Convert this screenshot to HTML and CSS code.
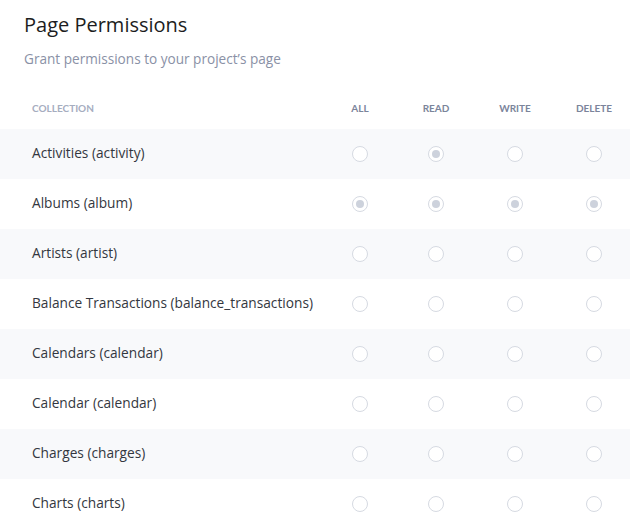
FILE: index.html
```html
<!DOCTYPE html>
<html lang="en">
<head>
<meta charset="utf-8">
<title>Page Permissions</title>
<link rel="stylesheet" href="styles.css">
</head>
<body>
<div class="page">
  <header class="intro">
    <h1 class="title">Page Permissions</h1>
    <p class="subtitle">Grant permissions to your project’s page</p>
  </header>
  <div class="table">
    <div class="row head">
      <div class="name">Collection</div>
      <div class="cell">All</div>
      <div class="cell">Read</div>
      <div class="cell">Write</div>
      <div class="cell">Delete</div>
    </div>
    <div class="row alt">
      <div class="name">Activities (activity)</div>
      <div class="cell"><span class="radio"></span></div>
      <div class="cell"><span class="radio on"></span></div>
      <div class="cell"><span class="radio"></span></div>
      <div class="cell"><span class="radio"></span></div>
    </div>
    <div class="row">
      <div class="name">Albums (album)</div>
      <div class="cell"><span class="radio on"></span></div>
      <div class="cell"><span class="radio on"></span></div>
      <div class="cell"><span class="radio on"></span></div>
      <div class="cell"><span class="radio on"></span></div>
    </div>
    <div class="row alt">
      <div class="name">Artists (artist)</div>
      <div class="cell"><span class="radio"></span></div>
      <div class="cell"><span class="radio"></span></div>
      <div class="cell"><span class="radio"></span></div>
      <div class="cell"><span class="radio"></span></div>
    </div>
    <div class="row">
      <div class="name">Balance Transactions (balance_transactions)</div>
      <div class="cell"><span class="radio"></span></div>
      <div class="cell"><span class="radio"></span></div>
      <div class="cell"><span class="radio"></span></div>
      <div class="cell"><span class="radio"></span></div>
    </div>
    <div class="row alt">
      <div class="name">Calendars (calendar)</div>
      <div class="cell"><span class="radio"></span></div>
      <div class="cell"><span class="radio"></span></div>
      <div class="cell"><span class="radio"></span></div>
      <div class="cell"><span class="radio"></span></div>
    </div>
    <div class="row">
      <div class="name">Calendar (calendar)</div>
      <div class="cell"><span class="radio"></span></div>
      <div class="cell"><span class="radio"></span></div>
      <div class="cell"><span class="radio"></span></div>
      <div class="cell"><span class="radio"></span></div>
    </div>
    <div class="row alt">
      <div class="name">Charges (charges)</div>
      <div class="cell"><span class="radio"></span></div>
      <div class="cell"><span class="radio"></span></div>
      <div class="cell"><span class="radio"></span></div>
      <div class="cell"><span class="radio"></span></div>
    </div>
    <div class="row">
      <div class="name">Charts (charts)</div>
      <div class="cell"><span class="radio"></span></div>
      <div class="cell"><span class="radio"></span></div>
      <div class="cell"><span class="radio"></span></div>
      <div class="cell"><span class="radio"></span></div>
    </div>
  </div>
</div>
</body>
</html>
```

FILE: styles.css
```css
html, body {
  margin: 0;
  padding: 0;
  background: #ffffff;
}
body {
  font-family: "Open Sans", "Noto Sans", sans-serif;
  color: #333740;
  width: 630px;
  height: 522px;
  overflow: hidden;
}
.page {
  display: flex;
  flex-direction: column;
}
.intro {
  padding: 11px 24px 0 24px;
}
.title {
  margin: 0;
  font-size: 20px;
  line-height: 28px;
  font-weight: 400;
  color: #1c1d21;
}
.subtitle {
  margin: 10px 0 0 0;
  font-size: 13.6px;
  line-height: 20px;
  color: #8a91a6;
}
.table {
  margin-top: 16px;
  display: flex;
  flex-direction: column;
}
.row {
  display: grid;
  grid-template-columns: 320px 80px 72px 86px 72px;
  align-items: center;
  height: 50px;
}
.row.alt {
  background: #f8f9fb;
}
.row.head {
  height: 44px;
  padding-top: 2px;
  box-sizing: border-box;
  font-family: "Lato", "Open Sans", sans-serif;
  font-size: 10px;
  text-transform: uppercase;
  font-weight: 700;
}
.name {
  padding-left: 32px;
  padding-bottom: 4px;
  font-size: 13.7px;
  white-space: nowrap;
}
.head .name {
  font-size: 10px;
  padding-bottom: 0;
  color: #a6adbf;
  font-weight: 700;
}
.head .cell {
  color: #7b849b;
}
.cell {
  display: flex;
  justify-content: center;
  align-items: center;
}
.radio {
  width: 16px;
  height: 16px;
  box-sizing: border-box;
  border: 1px solid #d6dae2;
  border-radius: 50%;
  background: #ffffff;
  display: flex;
  align-items: center;
  justify-content: center;
}
.radio.on::after {
  content: "";
  width: 8px;
  height: 8px;
  border-radius: 50%;
  background: #cdd2dc;
}
```
